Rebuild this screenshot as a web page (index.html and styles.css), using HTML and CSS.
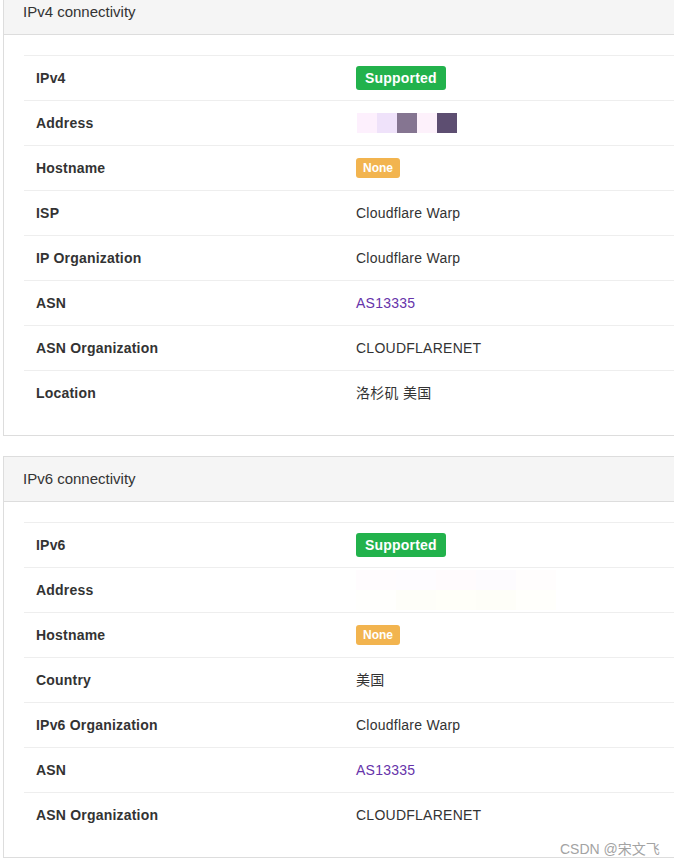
FILE: index.html
```html
<!DOCTYPE html>
<html>
<head>
<meta charset="utf-8">
<link rel="stylesheet" href="styles.css">
</head>
<body>
<div class="page">
  <section class="panel">
    <div class="panel-heading">IPv4 connectivity</div>
    <div class="panel-body">
      <div class="info">
        <div class="row"><div class="key">IPv4</div><div class="val"><span class="badge ok">Supported</span></div></div>
        <div class="row"><div class="key">Address</div><div class="val"><span class="blur"><i class="c1"></i><i class="c2"></i><i class="c3"></i><i class="c4"></i><i class="c5"></i></span></div></div>
        <div class="row"><div class="key">Hostname</div><div class="val"><span class="badge none">None</span></div></div>
        <div class="row"><div class="key">ISP</div><div class="val">Cloudflare Warp</div></div>
        <div class="row"><div class="key">IP Organization</div><div class="val">Cloudflare Warp</div></div>
        <div class="row"><div class="key">ASN</div><div class="val"><a class="asn" href="#">AS13335</a></div></div>
        <div class="row"><div class="key">ASN Organization</div><div class="val">CLOUDFLARENET</div></div>
        <div class="row"><div class="key">Location</div><div class="val">洛杉矶 美国</div></div>
      </div>
    </div>
  </section>
  <section class="panel">
    <div class="panel-heading">IPv6 connectivity</div>
    <div class="panel-body">
      <div class="info">
        <div class="row"><div class="key">IPv6</div><div class="val"><span class="badge ok">Supported</span></div></div>
        <div class="row"><div class="key">Address</div><div class="val"><span class="faint"><i class="f1"></i><i class="f2"></i><i class="f3"></i><i class="f4"></i><i class="f5"></i><i class="f6"></i><i class="f7"></i><i class="f8"></i><i class="f9"></i><i class="f10"></i></span></div></div>
        <div class="row"><div class="key">Hostname</div><div class="val"><span class="badge none">None</span></div></div>
        <div class="row"><div class="key">Country</div><div class="val">美国</div></div>
        <div class="row"><div class="key">IPv6 Organization</div><div class="val">Cloudflare Warp</div></div>
        <div class="row"><div class="key">ASN</div><div class="val"><a class="asn" href="#">AS13335</a></div></div>
        <div class="row"><div class="key">ASN Organization</div><div class="val">CLOUDFLARENET</div></div>
      </div>
    </div>
  </section>
</div>
<div class="watermark">CSDN @宋文飞</div>
</body>
</html>
```
FILE: styles.css
```css
html, body {
  margin: 0;
  padding: 0;
  background: #fff;
  overflow: hidden;
  height: 865px;
}
body {
  font-family: "Liberation Sans", Arial, "Noto Sans CJK SC", sans-serif;
  font-size: 14px;
  line-height: 20px;
  color: #333;
  position: relative;
}
.page {
  padding-left: 3px;
  margin-top: -11px;
}
.panel {
  border: 1px solid #ddd;
  border-right: none;
  margin-bottom: 20px;
  background: #fff;
}
.panel-heading {
  background: #f5f5f5;
  border-bottom: 1px solid #ddd;
  padding: 12px 19px;
  font-size: 15px;
  line-height: 20px;
  color: #333;
}
.panel-body {
  padding: 20px 0 20px 20px;
}
.info {
  display: flex;
  flex-direction: column;
}
.row {
  display: flex;
  align-items: center;
  height: 44px;
  border-top: 1px solid #eee;
}
.row .key,
.row .val {
  padding: 0 12px;
  white-space: nowrap;
  line-height: 20px;
  display: flex;
  align-items: center;
}
.row .key {
  width: 296px;
  font-weight: bold;
  color: #333;
  letter-spacing: 0.2px;
}
.row .val {
  color: #333;
  letter-spacing: 0.25px;
}
.badge {
  display: inline-block;
  color: #fff;
  font-weight: bold;
  border-radius: 3px;
  letter-spacing: 0.2px;
}
.badge.ok {
  background: #22b24c;
  font-size: 14px;
  line-height: 24px;
  padding: 0 9px;
}
.badge.none {
  background: #f2b44f;
  font-size: 12px;
  line-height: 20px;
  padding: 0 7px;
  letter-spacing: 0;
}
.asn {
  color: #6633aa;
  text-decoration: none;
}
.blur {
  display: flex;
  margin-left: 1px;
}
.blur i {
  display: block;
  width: 20px;
  height: 20px;
}
.blur .c1 { background: #fdf0fd; }
.blur .c2 { background: #efe2fa; }
.blur .c3 { background: #857591; }
.blur .c4 { background: #fdf1fb; }
.blur .c5 { background: #5d4e71; }
.faint {
  display: grid;
  grid-template-columns: repeat(5, 40px);
  grid-template-rows: 20px 20px;
}
.faint i { display: block; }
.faint .f1 { background: #fffcfe; }
.faint .f2 { background: #fefcff; }
.faint .f3 { background: #fffbfd; }
.faint .f4 { background: #fdfbfe; }
.faint .f5 { background: #fffdfd; }
.faint .f6 { background: #fffffd; }
.faint .f7 { background: #fefef9; }
.faint .f8 { background: #fffff9; }
.faint .f9 { background: #fefef8; }
.faint .f10 { background: #fffffb; }
.watermark {
  position: absolute;
  left: 560px;
  top: 840px;
  font-size: 14px;
  line-height: 18px;
  color: #a3a3a3;
  white-space: nowrap;
}
```
